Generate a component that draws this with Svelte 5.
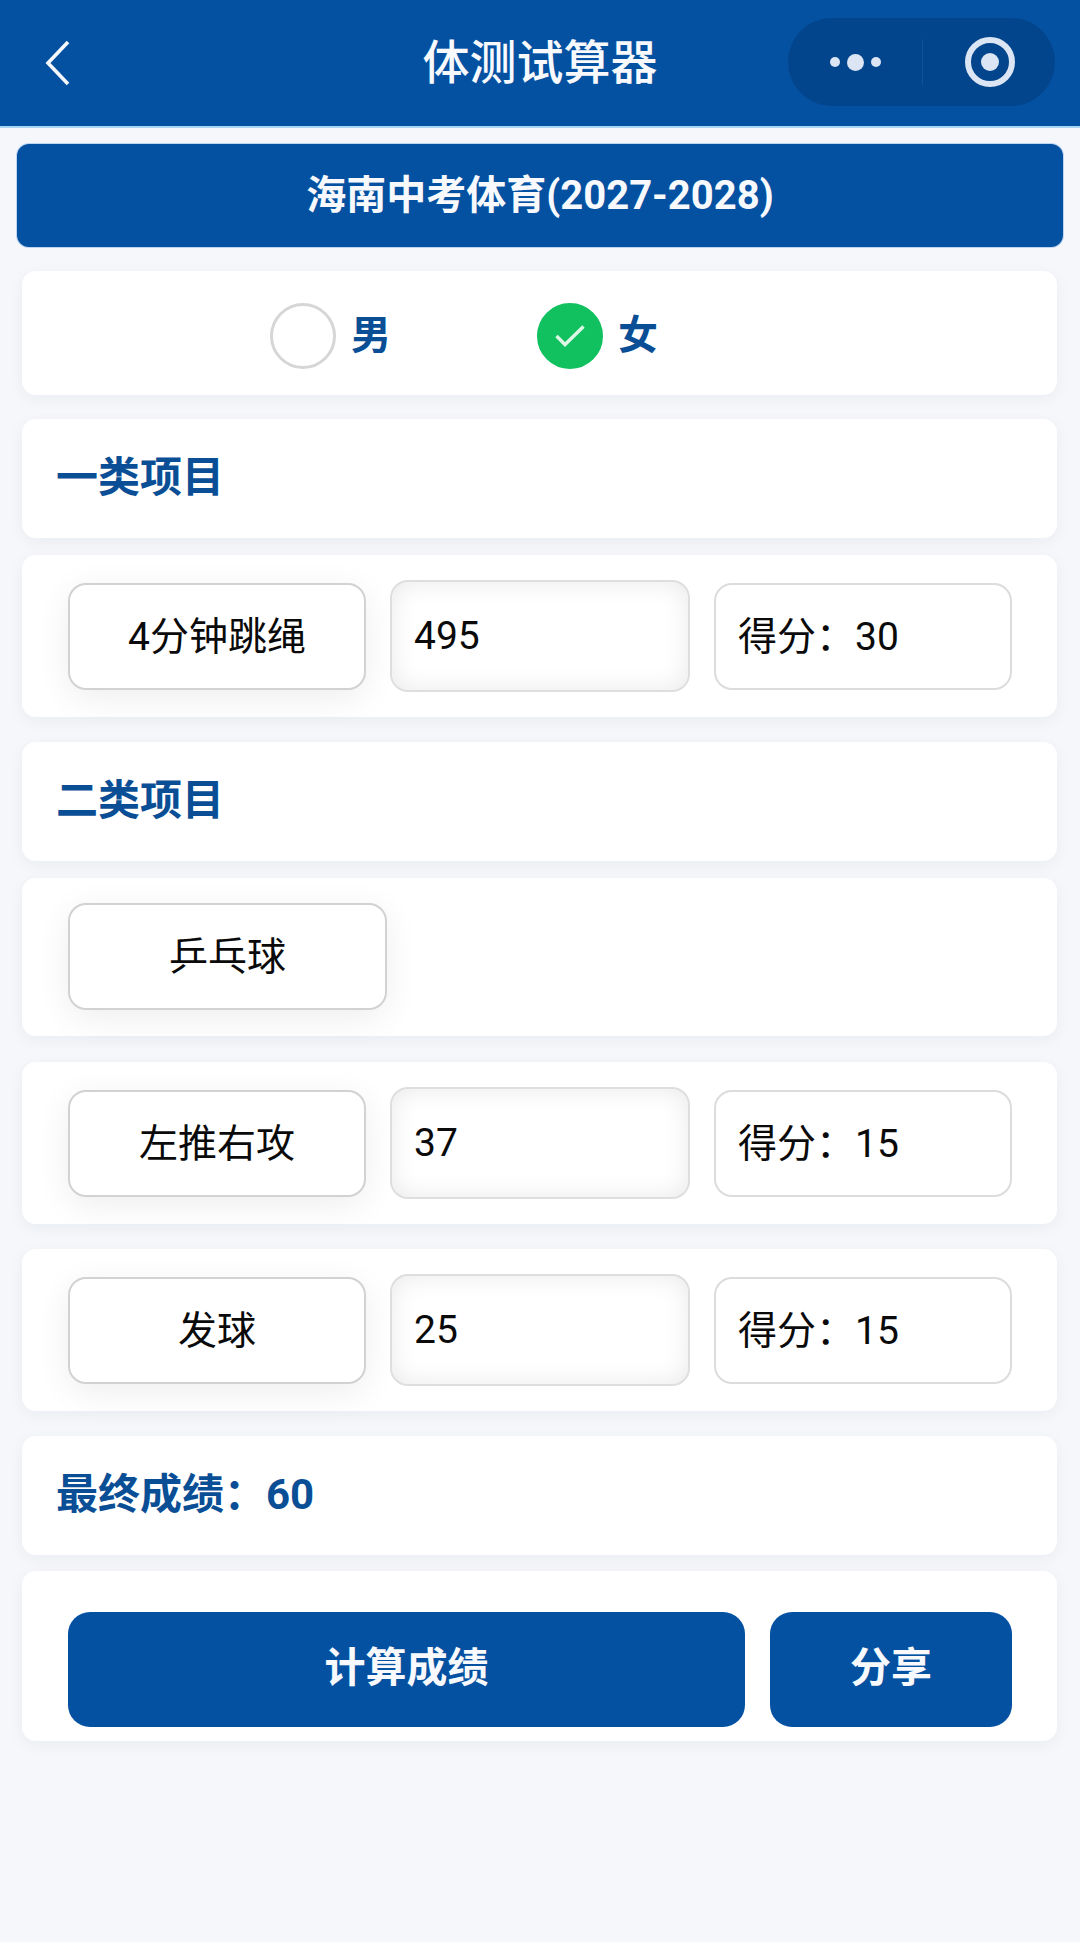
<script>
  const first = [{ name: '4分钟跳绳', value: '495', score: 30 }];
  const second = [
    { name: '左推右攻', value: '37', score: 15 },
    { name: '发球', value: '25', score: 15 }
  ];
  let gender = $state('女');
</script>

{#snippet row(item)}
  <section class="card row">
    <div class="box name">{item.name}</div>
    <div class="box input">{item.value}</div>
    <div class="box score">得分：{item.score}</div>
  </section>
{/snippet}

<header class="nav">
  <svg class="back" viewBox="0 0 26 46" width="26" height="46">
    <path d="M23 2 L3 23 L23 44" fill="none" stroke="#f4f7fc" stroke-width="3.6" />
  </svg>
  <h1>体测试算器</h1>
  <div class="capsule">
    <div class="dots">
      <i class="small"></i><i class="big"></i><i class="small"></i>
    </div>
    <div class="line"></div>
    <svg viewBox="0 0 50 50" width="50" height="50">
      <circle cx="25" cy="25" r="22" fill="none" stroke="#dbe5f3" stroke-width="6" />
      <circle cx="25" cy="25" r="9" fill="#dbe5f3" />
    </svg>
  </div>
</header>

<main>
  <div class="banner">海南中考体育(2027-2028)</div>

  <section class="card genders">
    {#each ['男', '女'] as g}
      <button class="gender" onclick={() => (gender = g)}>
        <span class="radio" class:on={gender === g}>
          {#if gender === g}
            <svg viewBox="0 0 30 22" width="30" height="22">
              <path d="M1.5 11 L10 19.5 L28.5 1.5" fill="none" stroke="#dcf7e6" stroke-width="3.4" />
            </svg>
          {/if}
        </span>
        <span class="glabel">{g}</span>
      </button>
    {/each}
  </section>

  <section class="card title tight">一类项目</section>
  {#each first as item}
    {@render row(item)}
  {/each}

  <section class="card title tight">二类项目</section>
  <section class="card row single">
    <div class="box name wide">乒乓球</div>
  </section>
  {#each second as item}
    {@render row(item)}
  {/each}

  <section class="card title tight16">最终成绩：60</section>

  <section class="card actions">
    <button class="btn calc">计算成绩</button>
    <button class="btn share">分享</button>
  </section>
</main>

<style>
  :global(body) {
    background: #f5f7fa;
    font-family: Roboto, "Noto Sans CJK SC", sans-serif;
  }
  .nav {
    height: 128px;
    background: #0551a1;
    border-bottom: 2px solid #a9d6f2;
    box-sizing: border-box;
    display: flex;
    align-items: center;
    justify-content: center;
    padding-bottom: 2px;
    position: relative;
  }
  .back {
    position: absolute;
    left: 45px;
    top: 40px;
  }
  h1 {
    margin: 0;
    color: #f7f9fd;
    font-size: 47px;
    font-weight: 500;
    line-height: 1;
  }
  .capsule {
    position: absolute;
    left: 788px;
    top: 18px;
    width: 267px;
    height: 88px;
    border-radius: 44px;
    background: #03458c;
    display: flex;
    align-items: center;
  }
  .dots {
    width: 134px;
    display: flex;
    align-items: center;
    justify-content: center;
    gap: 7px;
  }
  .dots i {
    display: block;
    background: #dbe5f3;
    border-radius: 50%;
  }
  .small {
    width: 10px;
    height: 10px;
  }
  .big {
    width: 17px;
    height: 17px;
  }
  .line {
    width: 1px;
    height: 46px;
    background: #0e5299;
  }
  .capsule svg {
    margin-left: 42px;
  }
  main {
    padding: 16px 17px 0;
    display: flex;
    flex-direction: column;
  }
  .banner {
    height: 103px;
    box-sizing: border-box;
    padding-bottom: 7px;
    background: #0551a1;
    border-radius: 12px;
    box-shadow: 0 0 0 1px rgba(120, 170, 230, .45);
    color: #f7f9fd;
    font-size: 40px;
    font-weight: 700;
    display: flex;
    align-items: center;
    justify-content: center;
    margin-bottom: 24px;
  }
  .card {
    margin: 0 6px 25px 5px;
    background: #fff;
    border-radius: 14px;
    box-shadow: 0 4px 16px rgba(20, 40, 80, .05);
    box-sizing: border-box;
  }
  .genders {
    height: 124px;
    display: flex;
    align-items: center;
    padding: 6px 0 0 248px;
    gap: 146px;
    margin-bottom: 24px;
  }
  .gender {
    display: flex;
    align-items: center;
    gap: 15px;
    border: 0;
    padding: 0;
    background: none;
    font: inherit;
  }
  .radio {
    width: 66px;
    height: 66px;
    box-sizing: border-box;
    border: 3px solid #d6d6d6;
    border-radius: 50%;
    display: flex;
    align-items: center;
    justify-content: center;
  }
  .radio.on {
    background: #11c15f;
    border-color: #11c15f;
  }
  .glabel {
    color: #0a4f96;
    font-size: 40px;
    font-weight: 700;
    line-height: 1;
    margin-bottom: 1px;
  }
  .title {
    height: 119px;
    padding: 0 0 10px 34px;
    display: flex;
    align-items: center;
    color: #0a4f96;
    font-size: 42px;
    font-weight: 700;
  }
  .tight {
    margin-bottom: 17px;
  }
  .tight16 {
    margin-bottom: 16px;
  }
  .row {
    height: 162px;
    padding: 0 45px 0 46px;
    display: flex;
    align-items: center;
    gap: 24px;
  }
  .row.single {
    height: 158px;
    padding-bottom: 2px;
    margin-bottom: 26px;
  }
  .box {
    width: 298px;
    height: 107px;
    box-sizing: border-box;
    padding-bottom: 7px;
    border: 2.5px solid #dcdcdc;
    border-radius: 18px;
    background: #fff;
    color: #0a0a0a;
    font-size: 39px;
    display: flex;
    align-items: center;
  }
  .name {
    justify-content: center;
    border-color: #d2d2d2;
    box-shadow: 0 8px 34px rgba(0, 0, 0, .07);
  }
  .wide {
    width: 319px;
  }
  .input {
    width: 300px;
    height: 112px;
    padding: 0 0 0 22px;
    border-color: #dedede;
    box-shadow: inset 0 0 26px rgba(0, 0, 0, .09);
  }
  .score {
    padding-left: 22px;
  }
  .actions {
    height: 170px;
    padding: 41px 45px 0 46px;
    display: flex;
    gap: 25px;
    align-items: flex-start;
  }
  .btn {
    height: 115px;
    padding-bottom: 12px;
    border: 0;
    border-radius: 22px;
    background: #0551a1;
    color: #f7f9fd;
    font: inherit;
    font-size: 41px;
    font-weight: 700;
  }
  .calc {
    width: 677px;
  }
  .share {
    width: 242px;
  }
</style>
